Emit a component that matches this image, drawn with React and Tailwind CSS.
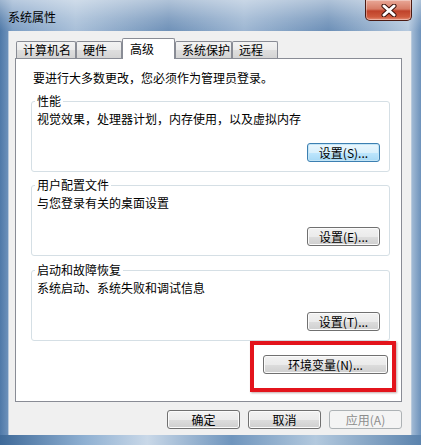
import React from 'react';

const font = { fontFamily: '"Noto Sans CJK SC", "Liberation Sans", sans-serif' };

// Win7 风格按钮
function WinButton({ children, width = 'w-[73px]', focused = false, disabled = false }) {
  let look =
    'border-[#707070] text-black bg-[linear-gradient(#f2f2f2_0%,#ebebeb_50%,#dddddd_51%,#cfcfcf_100%)] shadow-[inset_0_0_0_1px_#fbfbfb]';
  if (focused) {
    look =
      'border-[#3c7fb1] text-black bg-[linear-gradient(#eaf6fd_0%,#d9f0fc_50%,#bee6fd_51%,#a7d9f5_100%)] shadow-[inset_0_0_0_1px_#c4e5f6]';
  }
  if (disabled) {
    look = 'border-[#adb2b5] text-[#8d8d8d] bg-[#f4f4f4]';
  }
  return (
    <div
      className={`${width} h-[19px] border rounded-[3px] flex items-center justify-center text-[12px] leading-[14px] ${look}`}
    >
      {children}
    </div>
  );
}

function GroupBox({ title, desc, button, className = '' }) {
  return (
    <fieldset className={`ml-[15px] mr-[11px] border border-[#d5dfe5] rounded-[3px] pl-[3px] pb-[9px] ${className}`}>
      <legend className="px-[2px] text-[12px] leading-[14px]">{title}</legend>
      <div className="pl-[2px] pt-[4px] text-[12px] leading-[14px]">{desc}</div>
      <div className="flex justify-end mr-[9px] mt-[17px]">{button}</div>
    </fieldset>
  );
}

const tabs = [
  { label: '计算机名', w: 'w-[60px]' },
  { label: '硬件', w: 'w-[46px]' },
  { label: '高级', w: 'w-[53px]', active: true },
  { label: '系统保护', w: 'w-[57px]' },
  { label: '远程', w: 'w-[46px]' },
];

export default function App() {
  return (
    <div
      style={font}
      className="w-[421px] h-[445px] flex flex-col overflow-hidden text-black bg-[linear-gradient(90deg,#4f79a8_0%,#7d9ec4_3%,#a8bfd8_18%,#6f91b8_40%,#9db6d2_58%,#6c8fb7_78%,#b5c9de_97%,#6d92bb_100%)]"
    >
      {/* 标题栏 */}
      <div className="h-[31px] flex items-start justify-between pl-[8px] bg-[linear-gradient(180deg,rgba(255,255,255,0.45)_0%,rgba(255,255,255,0.15)_60%,rgba(255,255,255,0)_100%)]">
        <span className="pt-[10px] text-[12px] leading-[14px]">系统属性</span>
        <div className="mr-[9px] w-[47px] h-[21px] border border-t-0 border-[#4b1a12] rounded-b-[5px] flex items-center justify-center bg-[linear-gradient(#e9a897_0%,#d77c66_45%,#c0422a_55%,#cf5b3e_85%,#e7927a_100%)] shadow-[inset_0_0_0_1px_rgba(255,255,255,0.35)]">
          <svg width="16" height="13" viewBox="0 0 16 13">
            <path d="M3 2 L13 11 M13 2 L3 11" stroke="#3b120b" strokeWidth="5" strokeLinecap="round" />
            <path d="M3 2 L13 11 M13 2 L3 11" stroke="#ffffff" strokeWidth="3" strokeLinecap="round" />
          </svg>
        </div>
      </div>

      {/* 客户区 */}
      <div className="flex-1 ml-[8px] mr-[9px] bg-[#f0f0f0] flex flex-col pt-[7px] pl-[6px] pr-[9px] border-x border-[#b9cadc]">
        {/* 选项卡 */}
        <div className="h-[20px] flex items-end pl-[1px]">
          {tabs.map((t) =>
            t.active ? (
              <div
                key={t.label}
                className={`${t.w} h-[21px] -mb-px relative z-10 bg-white border border-b-0 border-[#898c95] rounded-t-[2px] flex items-center pl-[7px] text-[12px] leading-[14px]`}
              >
                {t.label}
              </div>
            ) : (
              <div
                key={t.label}
                className={`${t.w} h-[17px] border border-b-0 border-[#898c95] rounded-t-[2px] flex items-center pl-[6px] text-[12px] leading-[14px] bg-[linear-gradient(#f3f3f3_0%,#ebebeb_50%,#dedede_51%,#d4d4d4_100%)]`}
              >
                {t.label}
              </div>
            )
          )}
        </div>

        {/* 选项卡面板 */}
        <div className="h-[344px] bg-white border border-[#898c95] flex flex-col">
          <div className="pt-[12px] pl-[17px] text-[12px] leading-[14px]">
            要进行大多数更改，您必须作为管理员登录。
          </div>

          <GroupBox
            className="mt-[9px]"
            title="性能"
            desc="视觉效果，处理器计划，内存使用，以及虚拟内存"
            button={<WinButton focused>设置(S)...</WinButton>}
          />
          <GroupBox
            className="mt-[6px]"
            title="用户配置文件"
            desc="与您登录有关的桌面设置"
            button={<WinButton>设置(E)...</WinButton>}
          />
          <GroupBox
            className="mt-[7px]"
            title="启动和故障恢复"
            desc="系统启动、系统失败和调试信息"
            button={<WinButton>设置(T)...</WinButton>}
          />

          {/* 红框标注 */}
          <div className="self-end mr-[5px] w-[146px] h-[51px] border-[4px] border-[#e3141c] pl-[9px] pt-[10px] shadow-[1px_1px_2px_rgba(80,0,0,0.35)]">
            <WinButton width="w-[125px]">环境变量(N)...</WinButton>
          </div>
        </div>

        {/* 底部按钮 */}
        <div className="mt-[8px] flex justify-end gap-[8px]">
          <WinButton>确定</WinButton>
          <WinButton>取消</WinButton>
          <WinButton disabled>应用(A)</WinButton>
        </div>
      </div>

      {/* 底部边框 */}
      <div className="h-[10px] bg-[linear-gradient(90deg,#3f6a99_0%,#8fb0d2_20%,#c9d8e8_35%,#6f95bd_55%,#b3c9de_75%,#5b83ad_100%)]" />
    </div>
  );
}
